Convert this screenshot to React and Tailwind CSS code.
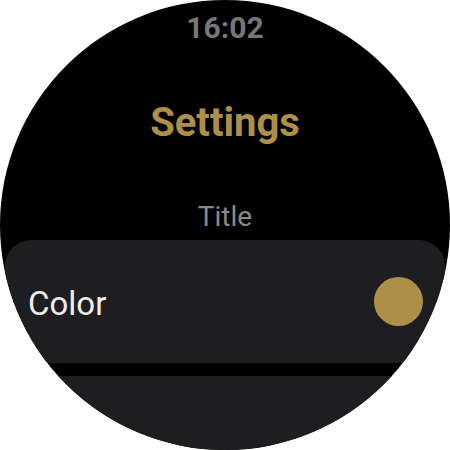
import React from "react";

function App() {
  return (
    <div className="w-[450px] h-[450px] bg-white" style={{ fontFamily: "Roboto, 'Noto Sans', sans-serif" }}>
      <div className="w-full h-full rounded-full bg-black overflow-hidden flex flex-col items-center">
        {/* Hora */}
        <div className="mt-[13px] text-[30px] leading-[30px] font-bold text-[#777777]">16:02</div>

        {/* Título */}
        <div className="mt-[60px] text-[40px] leading-[40px] font-bold text-[#ad8f4a]">Settings</div>

        <div className="mt-[60px] text-[28px] leading-[28px] text-[#888888]">Title</div>

        {/* Cartões */}
        <div className="mt-[9px] w-full px-[5px] flex flex-col gap-[13px]">
          <div className="h-[123px] rounded-[26px] bg-[#1e1e20] flex items-center justify-between pl-[23px] pr-[22px]">
            <span className="text-[33px] leading-[33px] pt-[3px] text-[#eeeeee]">Color</span>
            <span className="w-[49px] h-[49px] rounded-full bg-[#ad8f4a]" />
          </div>
          <div className="h-[123px] rounded-[26px] bg-[#1e1e20]" />
        </div>
      </div>
    </div>
  );
}

export default App;
